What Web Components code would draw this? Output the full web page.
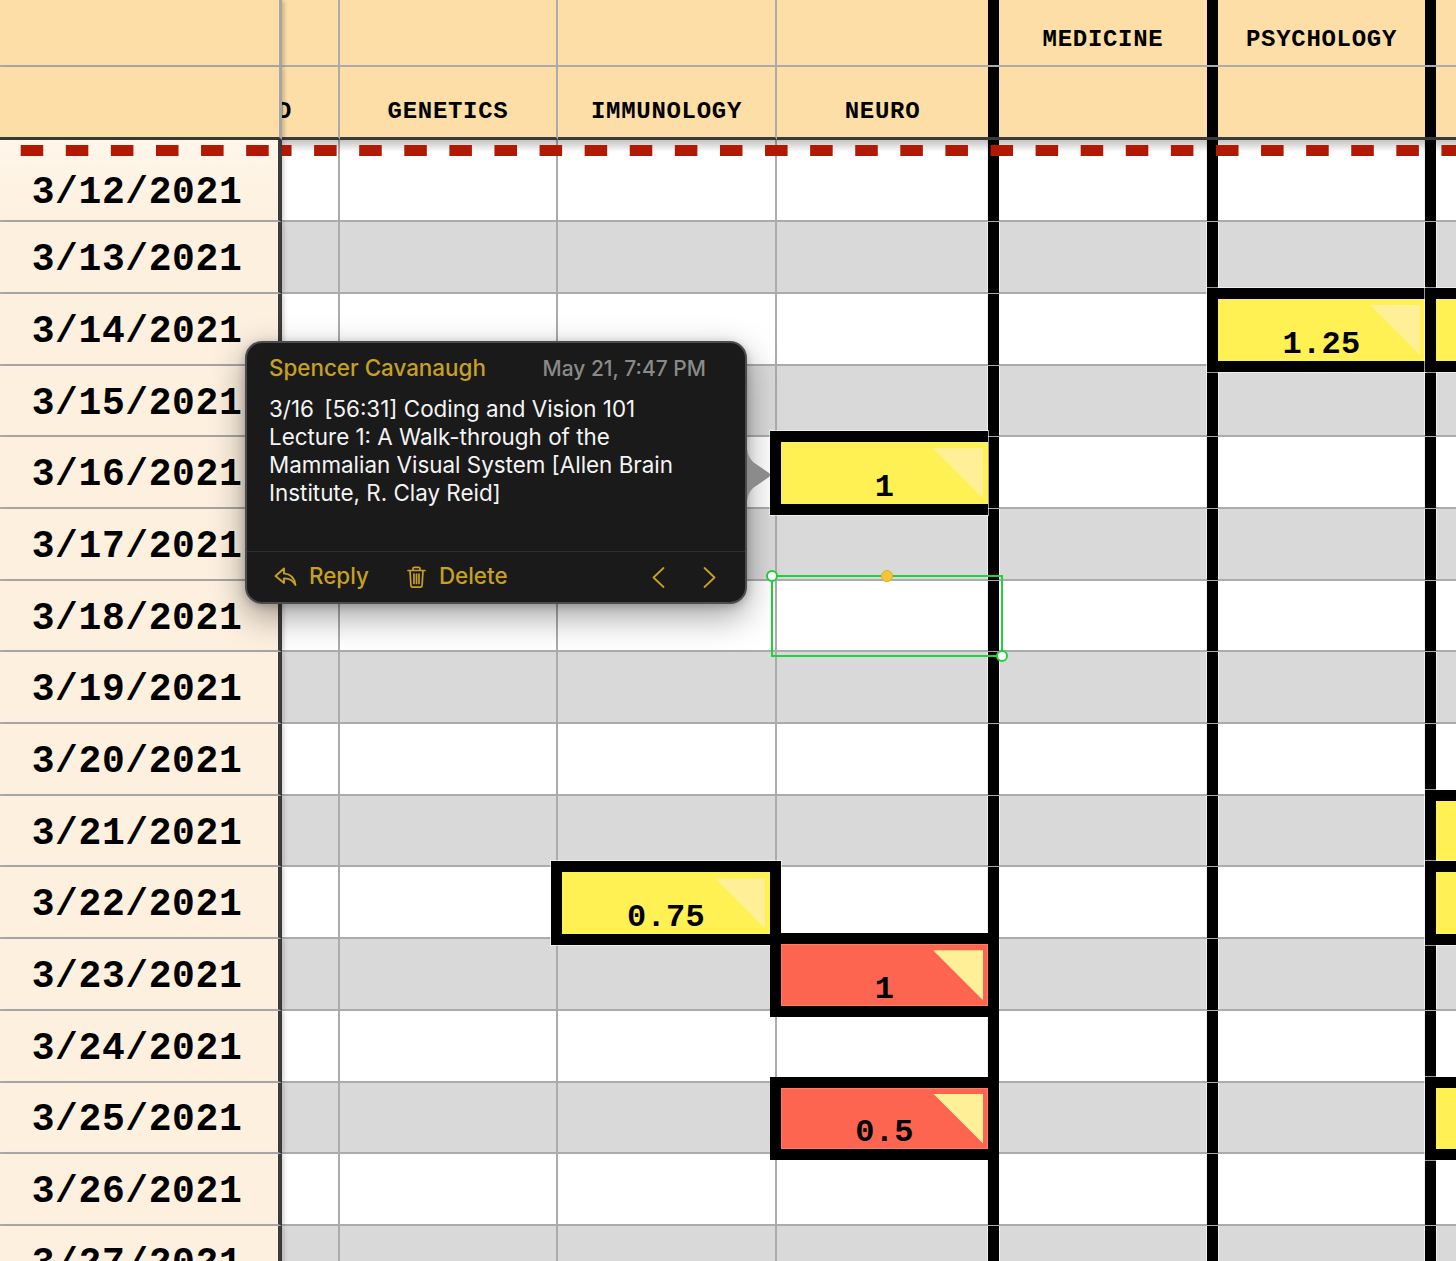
<!DOCTYPE html>
<html>
<head>
<meta charset="utf-8">
<title>Sheet</title>
<style>
  html, body { margin: 0; height: 1261px; overflow: hidden; background: #fff; }
</style>
</head>
<body>
<sheet-grid id="grid">
  <sheet-freeze slot="over"></sheet-freeze>
  <sheet-selection slot="over"></sheet-selection>
  <comment-popover slot="over">
    <span slot="author">Spencer Cavanaugh</span>
    <span slot="date">May 21, 7:47 PM</span>
    3/16&#8201; [56:31] Coding and Vision 101<br>Lecture 1: A Walk-through of the<br>Mammalian Visual System [Allen Brain<br>Institute, R. Clay Reid]
  </comment-popover>
</sheet-grid>

<script>
const lineColor = '#ababab'

customElements.define('sheet-grid', class extends HTMLElement {
  connectedCallback() {
    const shadow = this.attachShadow({mode: 'open'})
    shadow.innerHTML = `
    <style>
      :host{ display: block; position: relative; width: 1456px; height: 1261px; overflow: hidden; }
    </style>
    <slot></slot>
    <slot name="over"></slot>`
  }
})

customElements.define('sheet-row', class extends HTMLElement {
  connectedCallback() {
    const shadow = this.attachShadow({mode: 'open'})
    shadow.innerHTML = `
    <style>
      :host{
        display: grid;
        grid-template-columns: 282px 58px 218px 219px 222px 219px 218px 20px;
        height: 71.7px;
      }
      :host([first]){ height: 82.3px; }
      :host([top]){ height: 67px; }
      :host([sub]){ height: 73px; }
    </style>
    <slot></slot>`
  }
})

customElements.define('sheet-cell', class extends HTMLElement {
  connectedCallback() {
    const shadow = this.attachShadow({mode: 'open'})
    shadow.innerHTML = `
    <style>
      :host{
        display: block;
        position: relative;
        box-sizing: border-box;
        min-width: 0;
        background: #fff;
        border-bottom: 2px solid ${lineColor};
        border-right: 2px solid ${lineColor};
      }
      :host([grey]){ background: #d9d9d9; }
      :host([thick]){ border-right: 0; box-shadow: inset -12px 0 0 #f0f0f0; }
      :host([after-thick][grey]){ box-shadow: inset 1px 0 0 #f0f0f0; }
      :host([thick][after-thick][grey]){ box-shadow: inset -12px 0 0 #f0f0f0, inset 1px 0 0 #f0f0f0; }
      :host([last]){ border-right: 0; }
      .rail{ display: none; position: absolute; right: 0; top: 0; bottom: -1px; width: 11px; background: #000; }
      :host([thick]) .rail{ display: block; }
      :host([solid]) .rail{ bottom: -2px; }
      .box{ display: none; }
      :host([note]) .box{
        display: flex;
        align-items: flex-end;
        justify-content: center;
        position: absolute;
        z-index: 1;
        box-sizing: border-box;
        top: -6px;
        bottom: -8px;
        left: -7px;
        right: -6px;
        border: 11px solid #000;
        background: #fff053;
        box-shadow: 0 0 0 1px rgba(255,255,255,.6);
        font: bold 32px 'Liberation Mono', monospace;
        letter-spacing: .3px;
        line-height: 30px;
        color: #000;
      }
      :host([note="red"]) .box{ background: #fe6550; box-shadow: inset 0 0 0 1px #fb7f68; }
      :host([after-thick]) .box{ left: -11px; }
      :host([thick]) .box{ right: 11px; border-right: 0; }
      :host([last]) .box{ right: -20px; border-right: 0; }
      .tri{
        position: absolute;
        top: 6px;
        right: 5px;
        width: 50px;
        height: 50px;
        background: #fff097;
        clip-path: polygon(0 0, 100% 0, 100% 100%);
      }
      :host([last]) .tri{ display: none; }
      .val{ position: relative; padding-bottom: 1px; }
    </style>
    <div class="rail"></div>
    <div class="box"><span class="tri"></span><span class="val"><slot></slot></span></div>`
  }
})

// header cells: label sits low in the cell
customElements.define('head-cell', class extends HTMLElement {
  connectedCallback() {
    const shadow = this.attachShadow({mode: 'open'})
    shadow.innerHTML = `
    <style>
      :host{
        display: flex;
        align-items: flex-end;
        justify-content: center;
        box-sizing: border-box;
        min-width: 0;
        background: #fddea7;
        border-bottom: 2px solid ${lineColor};
        border-right: 2px solid ${lineColor};
        padding-bottom: 11px;
        font: bold 24px/28px 'Liberation Mono', monospace;
        letter-spacing: .7px;
        color: #000;
        white-space: nowrap;
      }
      :host([dark]){ border-bottom: 3px solid #3a3a3a; padding-bottom: 11px; }
      :host([thick]){ border-right: 0; padding-right: 11px; box-shadow: inset -11px 0 0 #000; }
      :host([last]){ border-right: 0; }
      :host([cut]){ justify-content: flex-start; }
      :host([cut]) span{ margin-left: -5px; }
      :host([frozen]){
        position: relative;
        z-index: 3;
        border-right: 3px solid #a6a6a6;
        box-shadow: 3px 0 4px -1px rgba(0,0,0,.22);
      }
    </style>
    <span><slot></slot></span>`
  }
})

customElements.define('date-cell', class extends HTMLElement {
  connectedCallback() {
    const shadow = this.attachShadow({mode: 'open'})
    shadow.innerHTML = `
    <style>
      :host{
        display: flex;
        align-items: center;
        justify-content: center;
        position: relative;
        z-index: 3;
        box-sizing: border-box;
        background: #fdf0df;
        border-bottom: 2px solid ${lineColor};
        border-right: 4px solid #3a3a3a;
        box-shadow: 3px 0 4px -1px rgba(0,0,0,.18);
        padding-top: 6px;
        padding-right: 4px;
        font: bold 38px/40px 'Liberation Mono', monospace;
        letter-spacing: .6px;
        color: #000;
        white-space: nowrap;
      }
      :host([first]){ padding-top: 26px; background: linear-gradient(#fff6ea, #fdf0df); }
    </style>
    <slot></slot>`
  }
})

customElements.define('sheet-freeze', class extends HTMLElement {
  connectedCallback() {
    const shadow = this.attachShadow({mode: 'open'})
    const dash = 'linear-gradient(90deg, #b11a02 22.5px, transparent 22.5px)'
    shadow.innerHTML = `
    <style>
      :host{ position: absolute; z-index: 5; left: 0; top: 140px; width: 1456px; height: 20px; display: flex; pointer-events: none; }
      .left, .right{ height: 20px; background-repeat: repeat-x, no-repeat; }
      .left{
        width: 278px;
        margin-right: 4px;
        background-image: ${dash};
        background-size: 45.1px 11px;
        background-position: 20.7px 5px;
      }
      .right{
        flex: 1;
        background-image: ${dash}, linear-gradient(rgba(0,0,0,.24), rgba(0,0,0,0));
        background-size: 45.1px 11px, 100% 12px;
        background-position: -13px 5px, 0 0;
      }
    </style>
    <div class="left"></div><div class="right"></div>`
  }
})

customElements.define('sheet-selection', class extends HTMLElement {
  connectedCallback() {
    const shadow = this.attachShadow({mode: 'open'})
    shadow.innerHTML = `
    <style>
      :host{ position: absolute; z-index: 9; left: 766px; top: 570px; width: 242px; height: 92px; pointer-events: none; }
      svg{ display: block; }
    </style>
    <svg width="242" height="92" viewBox="0 0 242 92">
      <rect x="6" y="6" width="230" height="80" fill="none" stroke="#1fd33a" stroke-width="2"/>
      <circle cx="6" cy="6" r="5" fill="#fff" stroke="#1fd33a" stroke-width="2"/>
      <circle cx="236" cy="86" r="5" fill="#fff" stroke="#1fd33a" stroke-width="2"/>
      <circle cx="121" cy="6" r="5.500" fill="#f6c535" stroke="#e3ac32" stroke-width="1"/>
    </svg>`
  }
})

customElements.define('comment-popover', class extends HTMLElement {
  connectedCallback() {
    const shadow = this.attachShadow({mode: 'open'})
    shadow.innerHTML = `
    <style>
      :host{
        position: absolute;
        z-index: 10;
        left: 245px;
        top: 341px;
        width: 502px;
        height: 263px;
        box-sizing: border-box;
        display: flex;
        flex-direction: column;
        background: #1a1a1a;
        border: 2px solid #4c4c4c;
        border-radius: 17px;
        box-shadow: 0 12px 34px rgba(0,0,0,.38), 0 2px 8px rgba(0,0,0,.2);
        font: 400 22.4px/28px Inter, 'Noto Sans', sans-serif;
        color: #f4f4f4;
      }
      .head{
        display: flex;
        justify-content: space-between;
        align-items: baseline;
        padding: 11px 39px 0 22px;
        font-weight: 500;
      }
      .author{ color: #c6a122; }
      .date{ color: #8a8a8a; font-size: 21px; }
      .body{ flex: 1; padding: 12px 22px 0; }
      .foot{
        display: flex;
        align-items: center;
        height: 50px;
        border-top: 1px solid #2e2e2e;
        padding: 0 29px 0 27px;
        color: #c6a122;
        font-weight: 500;
      }
      .foot svg{ display: block; flex: none; }
      .foot span{ margin-top: -3px; }
      .reply{ margin-left: 12px; }
      .trash{ margin-left: 38px; }
      .delete{ margin-left: 13px; }
      .prev{ margin-left: auto; }
      .next{ margin-left: 38px; }
      .tip{ position: absolute; left: 500px; top: 106px; }
    </style>
    <div class="head">
      <span class="author"><slot name="author"></slot></span>
      <span class="date"><slot name="date"></slot></span>
    </div>
    <div class="body"><slot></slot></div>
    <div class="foot">
      <svg width="23" height="20" viewBox="0 0 23 20" fill="none" stroke="#c6a122" stroke-width="1.9" stroke-linejoin="round"><path d="M10 1.500 1.500 9l8.500 7v-4.600c4.600-.3 8.600 1.600 11.500 6.600-.8-6.600-4.800-11-11.500-11.600z"/></svg>
      <span class="reply">Reply</span>
      <svg class="trash" width="19" height="22" viewBox="0 0 19 22" fill="none" stroke="#c6a122" stroke-width="1.7" stroke-linecap="round" stroke-linejoin="round"><path d="M1 4.500h17M6 4.500V2.600q0-1.300 1.300-1.300h4.400q1.300 0 1.300 1.300v1.900M3 4.500l.9 14.900q.1 1.700 1.800 1.700h7.600q1.700 0 1.800-1.700L16 4.500M7 8v9.500M9.500 8v9.500M12 8v9.500"/></svg>
      <span class="delete">Delete</span>
      <svg class="prev" width="13" height="21" viewBox="0 0 13 21" fill="none" stroke="#c6a122" stroke-width="1.8" stroke-linecap="round" stroke-linejoin="round"><path d="M11.500 1 1.500 10.500l10 9.500"/></svg>
      <svg class="next" width="13" height="21" viewBox="0 0 13 21" fill="none" stroke="#c6a122" stroke-width="1.8" stroke-linecap="round" stroke-linejoin="round"><path d="M1.500 1l10 9.500-10 9.500"/></svg>
    </div>
    <svg class="tip" width="24" height="52" viewBox="0 0 24 52"><path d="M0 0q1 8 6 13l16 11q2 2 0 4L6 39q-5 5-6 13z" fill="#8b8b8b"/></svg>`
  }
})

// fill in the sheet
const grid = document.getElementById('grid')
const colCount = 8
const isThick = c => c === 4 || c === 5 || c === 6
const notes = {
  '2-6': ['yellow', '1.25'], '2-7': ['yellow', ''],
  '4-4': ['yellow', '1'],
  '9-7': ['yellow', ''], '10-7': ['yellow', ''], '13-7': ['yellow', ''],
  '10-3': ['yellow', '0.75'],
  '11-4': ['red', '1'],
  '13-4': ['red', '0.5'],
}
const headLabels = [
  {5: 'MEDICINE', 6: 'PSYCHOLOGY'},
  {1: 'D', 2: 'GENETICS', 3: 'IMMUNOLOGY', 4: 'NEURO'},
]

const frag = document.createDocumentFragment()
headLabels.forEach((labels, h) => {
  const row = document.createElement('sheet-row')
  row.setAttribute(h ? 'sub' : 'top', '')
  for (let c = 0; c < colCount; c++) {
    const cell = document.createElement('head-cell')
    if (h) cell.setAttribute('dark', '')
    if (c === 0) cell.setAttribute('frozen', '')
    if (c === 1) cell.setAttribute('cut', '')
    if (isThick(c)) cell.setAttribute('thick', '')
    if (c === colCount - 1) cell.setAttribute('last', '')
    cell.textContent = labels[c] || ''
    row.appendChild(cell)
  }
  frag.appendChild(row)
})

for (let r = 0; r < 16; r++) {
  const row = document.createElement('sheet-row')
  if (r === 0) row.setAttribute('first', '')
  const date = document.createElement('date-cell')
  if (r === 0) date.setAttribute('first', '')
  date.textContent = `3/${12 + r}/2021`
  row.appendChild(date)
  for (let c = 1; c < colCount; c++) {
    const cell = document.createElement('sheet-cell')
    if (r % 2) cell.setAttribute('grey', '')
    if (isThick(c)) cell.setAttribute('thick', '')
    if (c >= 5) cell.setAttribute('after-thick', '')
    if (c === colCount - 1) cell.setAttribute('last', '')
    if (c === 4 && r >= 10 && r <= 13) cell.setAttribute('solid', '')
    const note = notes[r + '-' + c]
    if (note) {
      cell.setAttribute('note', note[0])
      cell.textContent = note[1]
    }
    row.appendChild(cell)
  }
  frag.appendChild(row)
}
grid.insertBefore(frag, grid.firstChild)
</script>
</body>
</html>
